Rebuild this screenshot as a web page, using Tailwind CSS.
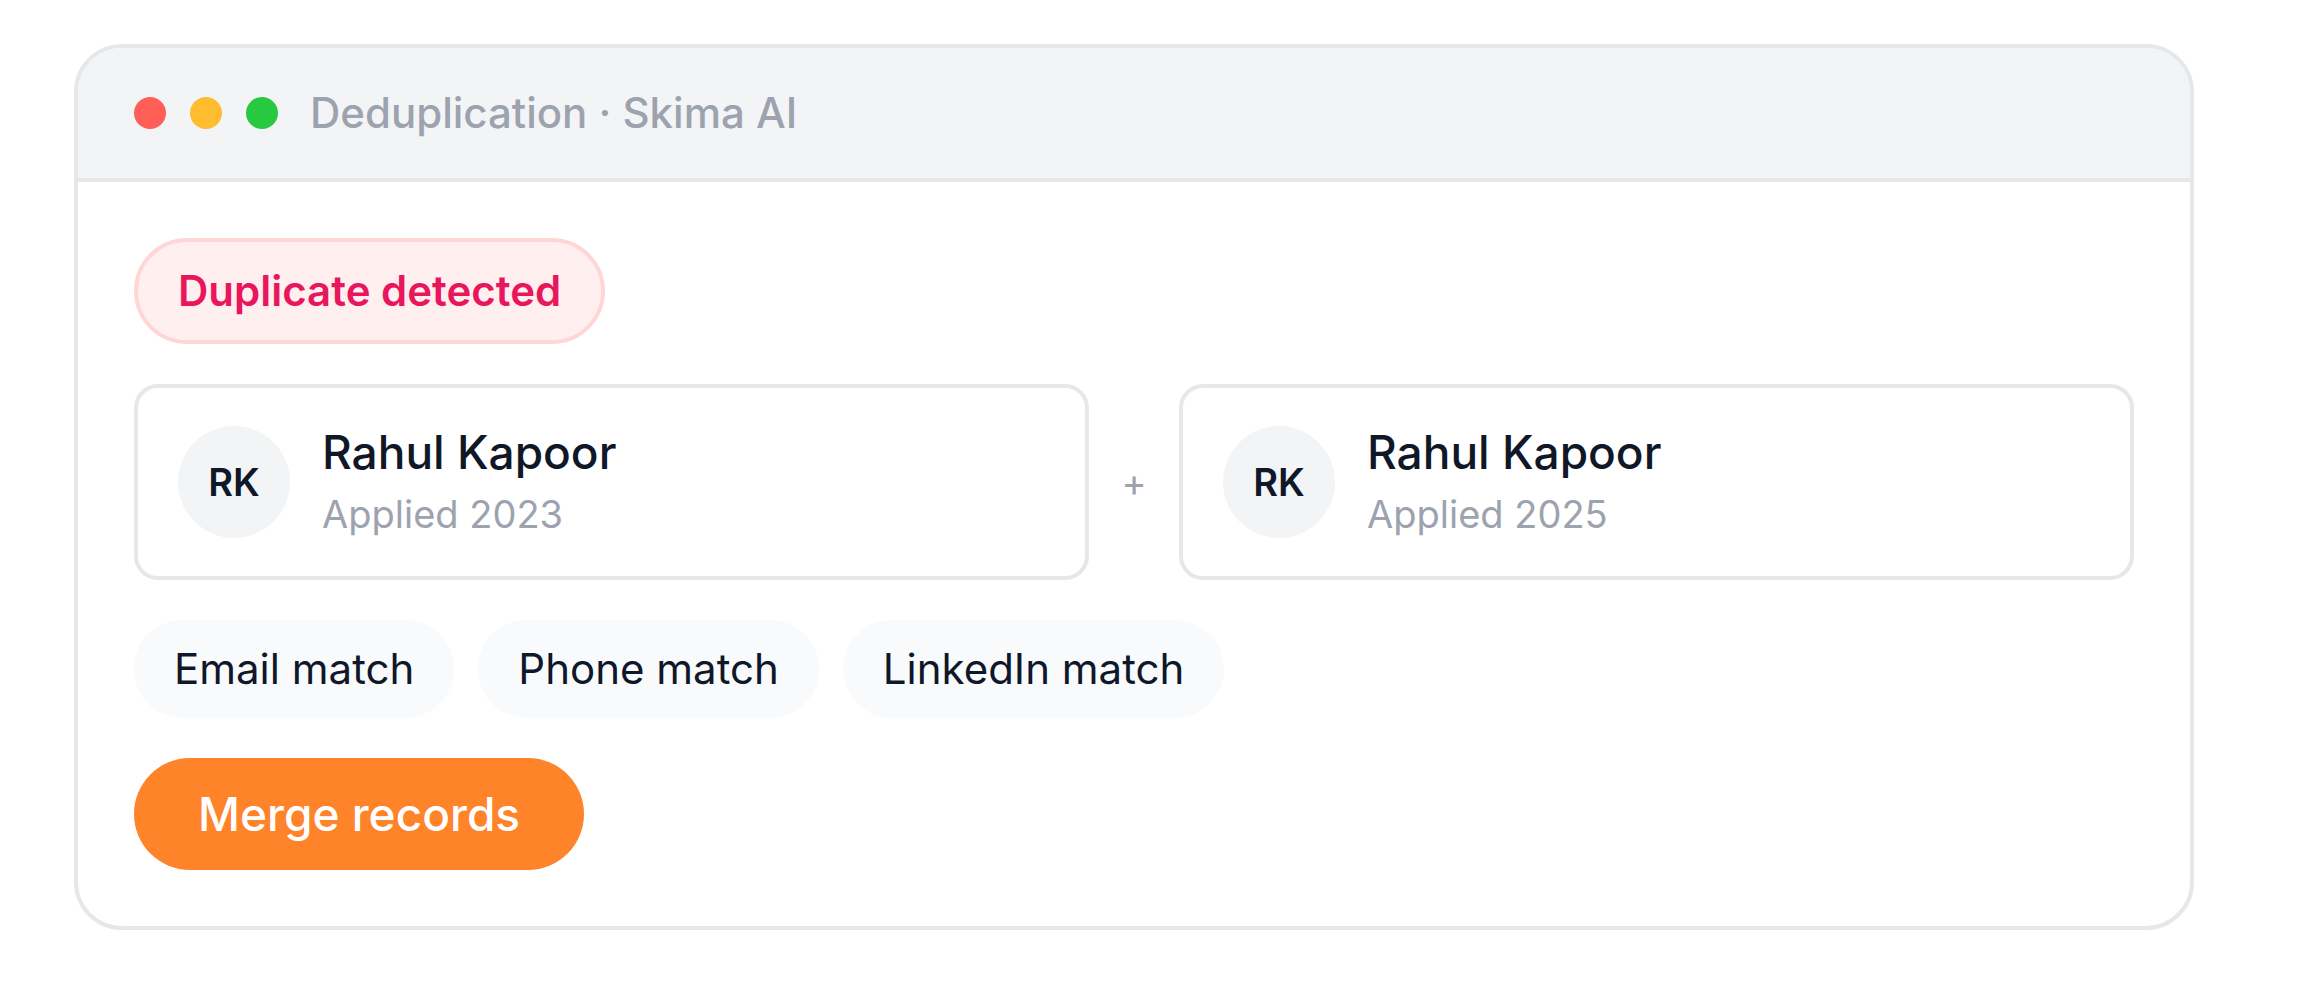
<!DOCTYPE html>
<html lang="en">
  <head>
    <meta charset="UTF-8" />
    <meta name="viewport" content="width=device-width, initial-scale=1.0" />
    <script src="https://cdn.jsdelivr.net/npm/@tailwindcss/browser@4"></script>
    <title>Deduplication · Skima AI</title>
  </head>
  <body class="bg-white font-['Inter','Liberation_Sans',sans-serif] text-gray-900">
    <main class="pt-11 pb-19 pl-[74px] pr-[108px]">
      <section class="overflow-hidden rounded-[48px] border-4 border-gray-200 bg-white">
        <!-- Title bar -->
        <header class="flex items-center gap-8 border-b-4 border-gray-200 bg-gray-100 px-14 py-9">
          <div class="flex gap-6">
            <span class="size-8 rounded-full bg-[#ff5f57]"></span>
            <span class="size-8 rounded-full bg-[#febc2e]"></span>
            <span class="size-8 rounded-full bg-[#28c840]"></span>
          </div>
          <h1 class="text-[42px] leading-[58px] font-medium text-[#9ca3af]">Deduplication · Skima AI</h1>
        </header>

        <div class="flex flex-col items-start gap-10 p-14">
          <span class="rounded-full border-4 border-[#ffd6d5] bg-[#fff0ef] px-10 py-5 text-[42px] leading-[58px] font-semibold text-[#e8175d]">Duplicate detected</span>

          <!-- Records -->
          <div class="flex w-full items-center gap-8">
            <article class="flex flex-1 items-center gap-8 rounded-3xl border-4 border-gray-200 px-10 py-9">
              <div class="flex size-28 items-center justify-center rounded-full bg-gray-100 text-[38px] font-semibold text-[#0f172a]">RK</div>
              <div>
                <h2 class="text-[46px] leading-[56px] font-medium">Rahul Kapoor</h2>
                <p class="mt-2 text-[38px] leading-[52px] text-[#9ca3af]">Applied 2023</p>
              </div>
            </article>
            <span class="w-[26px] text-center text-[38px] leading-[52px] text-[#9ca3af]">+</span>
            <article class="flex flex-1 items-center gap-8 rounded-3xl border-4 border-gray-200 px-10 py-9">
              <div class="flex size-28 items-center justify-center rounded-full bg-gray-100 text-[38px] font-semibold text-[#0f172a]">RK</div>
              <div>
                <h2 class="text-[46px] leading-[56px] font-medium">Rahul Kapoor</h2>
                <p class="mt-2 text-[38px] leading-[52px] text-[#9ca3af]">Applied 2025</p>
              </div>
            </article>
          </div>

          <!-- Matches -->
          <ul class="flex gap-6 text-[42px] leading-[58px] text-[#0f172a]">
            <li class="rounded-full bg-[#f9fafc] px-10 py-5">Email match</li>
            <li class="rounded-full bg-[#f9fafc] px-10 py-5">Phone match</li>
            <li class="rounded-full bg-[#f9fafc] px-10 py-5">LinkedIn match</li>
          </ul>

          <button type="button" class="rounded-full bg-[#ff8329] px-16 py-6 text-[46px] leading-[64px] font-medium text-white">Merge records</button>
        </div>
      </section>
    </main>
  </body>
</html>
